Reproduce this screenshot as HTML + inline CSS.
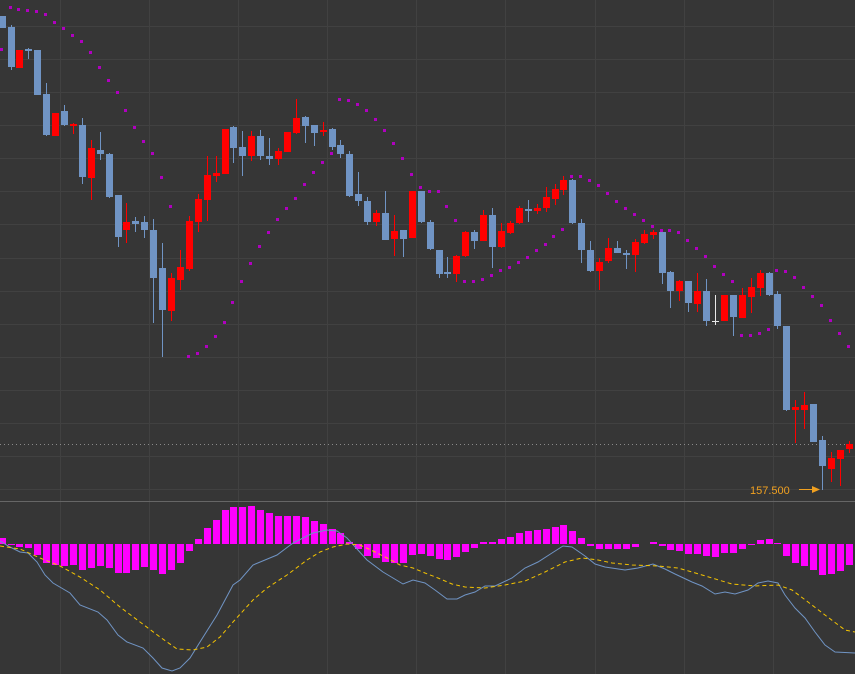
<!DOCTYPE html>
<html><head><meta charset="utf-8"><style>
html,body{margin:0;padding:0;background:#363636;}
svg{display:block}
</style></head><body>
<svg width="855" height="674" viewBox="0 0 855 674" xmlns="http://www.w3.org/2000/svg">
<rect width="855" height="674" fill="#363636"/>
<g stroke="#414141" stroke-width="1" shape-rendering="crispEdges">
<path d="M0 26.5H855M0 59.5H855M0 92.5H855M0 125.5H855M0 158.5H855M0 191.5H855M0 224.5H855M0 258.5H855M0 291.5H855M0 324.5H855M0 357.5H855M0 390.5H855M0 423.5H855M0 456.5H855M0 489.5H855"/>
<path d="M60.5 0V674M149.5 0V674M238.5 0V674M327.5 0V674M416.5 0V674M505.5 0V674M595.5 0V674M684.5 0V674M773.5 0V674"/>
</g>
<path d="M0 444.5H855" stroke="#8a8a8a" stroke-dasharray="1 3" shape-rendering="crispEdges"/>
<path d="M0 501.5H855" stroke="#666" shape-rendering="crispEdges"/>

<!-- SAR -->
<g fill="#b000c0">
<rect x="0" y="48" width="3" height="3"/>
<rect x="9" y="6" width="3" height="3"/><rect x="17" y="8" width="3" height="3"/><rect x="26" y="9" width="3" height="3"/><rect x="35" y="10" width="3" height="3"/><rect x="44" y="13" width="3" height="3"/><rect x="53" y="21" width="3" height="3"/><rect x="62" y="27" width="3" height="3"/><rect x="71" y="34" width="3" height="3"/><rect x="80" y="40" width="3" height="3"/><rect x="89" y="51" width="3" height="3"/><rect x="98" y="66" width="3" height="3"/><rect x="107" y="79" width="3" height="3"/><rect x="116" y="91" width="3" height="3"/><rect x="124" y="109" width="3" height="3"/><rect x="133" y="126" width="3" height="3"/><rect x="142" y="140" width="3" height="3"/><rect x="151" y="152" width="3" height="3"/><rect x="160" y="176" width="3" height="3"/><rect x="169" y="205" width="3" height="3"/>
<rect x="187" y="355" width="3" height="3"/><rect x="196" y="352" width="3" height="3"/><rect x="205" y="345" width="3" height="3"/><rect x="214" y="335" width="3" height="3"/><rect x="223" y="321" width="3" height="3"/><rect x="231" y="301" width="3" height="3"/><rect x="240" y="280" width="3" height="3"/><rect x="249" y="262" width="3" height="3"/><rect x="258" y="245" width="3" height="3"/><rect x="267" y="231" width="3" height="3"/><rect x="276" y="218" width="3" height="3"/><rect x="285" y="207" width="3" height="3"/><rect x="294" y="197" width="3" height="3"/><rect x="303" y="183" width="3" height="3"/><rect x="312" y="171" width="3" height="3"/><rect x="321" y="161" width="3" height="3"/><rect x="330" y="152" width="3" height="3"/>
<rect x="338" y="98" width="3" height="3"/><rect x="347" y="99" width="3" height="3"/><rect x="356" y="103" width="3" height="3"/><rect x="365" y="109" width="3" height="3"/><rect x="374" y="118" width="3" height="3"/><rect x="383" y="129" width="3" height="3"/><rect x="392" y="142" width="3" height="3"/><rect x="401" y="157" width="3" height="3"/><rect x="410" y="173" width="3" height="3"/><rect x="419" y="186" width="3" height="3"/><rect x="428" y="190" width="3" height="3"/><rect x="437" y="190" width="3" height="3"/><rect x="445" y="205" width="3" height="3"/><rect x="454" y="219" width="3" height="3"/>
<rect x="463" y="280" width="3" height="3"/><rect x="472" y="280" width="3" height="3"/><rect x="481" y="278" width="3" height="3"/><rect x="490" y="274" width="3" height="3"/><rect x="499" y="269" width="3" height="3"/><rect x="508" y="266" width="3" height="3"/><rect x="517" y="261" width="3" height="3"/><rect x="526" y="256" width="3" height="3"/><rect x="535" y="249" width="3" height="3"/><rect x="544" y="243" width="3" height="3"/><rect x="552" y="235" width="3" height="3"/><rect x="561" y="228" width="3" height="3"/>
<rect x="570" y="175" width="3" height="3"/><rect x="579" y="175" width="3" height="3"/><rect x="588" y="179" width="3" height="3"/><rect x="597" y="184" width="3" height="3"/><rect x="606" y="192" width="3" height="3"/><rect x="615" y="200" width="3" height="3"/><rect x="624" y="207" width="3" height="3"/><rect x="633" y="213" width="3" height="3"/><rect x="642" y="219" width="3" height="3"/><rect x="651" y="225" width="3" height="3"/><rect x="660" y="229" width="3" height="3"/><rect x="668" y="229" width="3" height="3"/><rect x="677" y="231" width="3" height="3"/><rect x="686" y="239" width="3" height="3"/><rect x="695" y="247" width="3" height="3"/><rect x="704" y="255" width="3" height="3"/><rect x="713" y="265" width="3" height="3"/><rect x="722" y="273" width="3" height="3"/><rect x="731" y="280" width="3" height="3"/>
<rect x="740" y="334" width="3" height="3"/><rect x="749" y="334" width="3" height="3"/><rect x="758" y="332" width="3" height="3"/><rect x="767" y="328" width="3" height="3"/>
<rect x="775" y="269" width="3" height="3"/><rect x="784" y="270" width="3" height="3"/><rect x="793" y="276" width="3" height="3"/><rect x="802" y="286" width="3" height="3"/><rect x="811" y="295" width="3" height="3"/><rect x="820" y="304" width="3" height="3"/><rect x="829" y="319" width="3" height="3"/><rect x="838" y="332" width="3" height="3"/><rect x="847" y="345" width="3" height="3"/>
</g>

<!-- blue candles -->
<g fill="#7094c4" stroke="#7094c4" shape-rendering="crispEdges">
<path fill="none" d="M11.5 25V70M28.5 48V59M46.5 83V136M64.5 105V126M82.5 118V184M100.5 132V160M109.5 153V198M118.5 195V247M135.5 217V232M144.5 216V238M153.5 219V323M162.5 243V357M233.5 126V163M242.5 131V176M260.5 130V160M269.5 138V165M305.5 116V143M314.5 125V146M332.5 128V150M340.5 140V158M349.5 151V197M358.5 172V206M367.5 197V225M385.5 191V240M403.5 230V257M421.5 191V223M430.5 220V250M439.5 250V278M447.5 257V278M474.5 230V249M492.5 208V268M528.5 200V222M572.5 179V224M581.5 219V263M590.5 241V272M617.5 241V253M626.5 250V269M662.5 232V284M670.5 271V308M688.5 281V312M706.5 279V326M733.5 295V336M769.5 272V296M777.5 291V329M786.5 326V411M813.5 404V442M822.5 436V490"/>
<g stroke="none">
<rect x="0" y="16" width="6" height="12"/><rect x="8" y="27" width="7" height="40"/><rect x="25" y="49" width="7" height="2"/><rect x="34" y="50" width="7" height="45"/><rect x="43" y="94" width="7" height="41"/><rect x="61" y="111" width="7" height="14"/><rect x="79" y="125" width="7" height="52"/><rect x="97" y="150" width="7" height="4"/><rect x="106" y="154" width="7" height="43"/><rect x="115" y="195" width="7" height="42"/><rect x="132" y="221" width="7" height="3"/><rect x="141" y="222" width="7" height="8"/><rect x="150" y="230" width="7" height="48"/><rect x="159" y="268" width="7" height="42"/>
<rect x="230" y="127" width="7" height="21"/><rect x="239" y="147" width="7" height="9"/><rect x="257" y="136" width="7" height="20"/><rect x="266" y="156" width="7" height="3"/>
<rect x="302" y="117" width="7" height="9"/><rect x="311" y="125" width="7" height="8"/><rect x="329" y="129" width="7" height="18"/><rect x="337" y="145" width="7" height="9"/><rect x="346" y="154" width="7" height="42"/><rect x="355" y="194" width="7" height="7"/><rect x="364" y="201" width="7" height="21"/><rect x="382" y="213" width="7" height="27"/><rect x="400" y="230" width="7" height="9"/><rect x="418" y="191" width="7" height="31"/><rect x="427" y="222" width="7" height="27"/><rect x="436" y="250" width="7" height="24"/><rect x="444" y="272" width="7" height="2"/><rect x="471" y="232" width="7" height="9"/><rect x="489" y="215" width="7" height="32"/><rect x="525" y="209" width="7" height="2"/>
<rect x="569" y="180" width="7" height="43"/><rect x="578" y="223" width="7" height="27"/><rect x="587" y="250" width="7" height="21"/><rect x="614" y="248" width="7" height="5"/><rect x="623" y="253" width="7" height="2"/><rect x="659" y="232" width="7" height="41"/><rect x="667" y="272" width="7" height="19"/><rect x="685" y="281" width="7" height="22"/><rect x="703" y="291" width="7" height="30"/><rect x="730" y="295" width="7" height="22"/><rect x="766" y="273" width="7" height="22"/><rect x="774" y="294" width="7" height="32"/><rect x="783" y="326" width="7" height="84"/><rect x="810" y="404" width="7" height="38"/><rect x="819" y="440" width="7" height="26"/>
</g></g>

<!-- red candles -->
<g fill="#ff0000" stroke="#ff0000" shape-rendering="crispEdges">
<path fill="none" d="M73.5 123V134M91.5 140V200M126.5 203V243M171.5 273V321M180.5 250V290M189.5 216V271M198.5 194V232M207.5 156V221M216.5 156V182M251.5 131V161M278.5 148V165M296.5 99V134M323.5 122V136M376.5 210V226M394.5 215V256M456.5 255V282M465.5 231V257M483.5 210V241M501.5 223V248M510.5 221V234M519.5 206V224M537.5 204V214M546.5 187V212M555.5 184V205M563.5 176V195M599.5 258V290M608.5 238V263M635.5 239V272M644.5 230V244M653.5 230V239M679.5 280V301M697.5 273V312M742.5 288V318M751.5 278V313M760.5 270V296M795.5 400V443M804.5 392V429M831.5 452V482M840.5 450V486M849.5 441V453"/>
<g stroke="none">
<rect x="16" y="50" width="7" height="18"/><rect x="52" y="113" width="7" height="23"/><rect x="70" y="124" width="7" height="2"/><rect x="88" y="148" width="7" height="30"/><rect x="123" y="222" width="7" height="8"/><rect x="168" y="278" width="7" height="33"/><rect x="177" y="267" width="7" height="13"/><rect x="186" y="221" width="7" height="48"/><rect x="195" y="199" width="7" height="23"/><rect x="204" y="175" width="7" height="25"/><rect x="213" y="173" width="7" height="3"/><rect x="222" y="129" width="7" height="45"/><rect x="248" y="136" width="7" height="20"/><rect x="275" y="151" width="7" height="8"/><rect x="284" y="132" width="7" height="20"/><rect x="293" y="118" width="7" height="15"/><rect x="320" y="130" width="7" height="2"/>
<rect x="373" y="213" width="7" height="9"/><rect x="391" y="231" width="7" height="8"/><rect x="409" y="191" width="7" height="47"/><rect x="453" y="256" width="7" height="18"/><rect x="462" y="232" width="7" height="24"/><rect x="480" y="215" width="7" height="26"/><rect x="498" y="231" width="7" height="16"/><rect x="507" y="223" width="7" height="10"/><rect x="516" y="208" width="7" height="15"/><rect x="534" y="208" width="7" height="3"/><rect x="543" y="197" width="7" height="11"/><rect x="552" y="189" width="7" height="10"/><rect x="560" y="180" width="7" height="10"/>
<rect x="596" y="262" width="7" height="9"/><rect x="605" y="248" width="7" height="13"/><rect x="632" y="242" width="7" height="13"/><rect x="641" y="234" width="7" height="9"/><rect x="650" y="232" width="7" height="3"/><rect x="676" y="281" width="7" height="10"/><rect x="694" y="291" width="7" height="13"/><rect x="721" y="295" width="7" height="26"/><rect x="739" y="295" width="7" height="23"/><rect x="748" y="287" width="7" height="10"/><rect x="757" y="273" width="7" height="15"/><rect x="792" y="407" width="7" height="3"/><rect x="801" y="405" width="7" height="5"/><rect x="828" y="458" width="7" height="11"/><rect x="837" y="450" width="7" height="9"/><rect x="846" y="444" width="7" height="5"/>
</g></g>
<path d="M715.5 295V325M712 321.5H719" stroke="#e8e8e8" fill="none" shape-rendering="crispEdges"/>

<!-- price label -->
<text x="750" y="494" font-family="Liberation Sans, sans-serif" font-size="11" fill="#f0a020">157.500</text>
<path d="M799 489.5H812" stroke="#f0a020"/>
<path d="M812 486L820 489.5L812 493Z" fill="#f0a020"/>

<!-- MACD histogram -->
<g fill="#ff00ff" shape-rendering="crispEdges">
<rect x="0" y="538" width="6" height="6"/><rect x="8" y="544" width="7" height="1"/><rect x="16" y="544" width="7" height="3"/><rect x="25" y="544" width="7" height="4"/><rect x="34" y="544" width="7" height="11"/><rect x="43" y="544" width="7" height="19"/><rect x="52" y="544" width="7" height="21"/><rect x="61" y="544" width="7" height="22"/><rect x="70" y="544" width="7" height="21"/><rect x="79" y="544" width="7" height="26"/><rect x="88" y="544" width="7" height="24"/><rect x="97" y="544" width="7" height="22"/><rect x="106" y="544" width="7" height="24"/><rect x="115" y="544" width="7" height="29"/><rect x="123" y="544" width="7" height="29"/><rect x="132" y="544" width="7" height="26"/><rect x="141" y="544" width="7" height="23"/><rect x="150" y="544" width="7" height="26"/><rect x="159" y="544" width="7" height="30"/><rect x="168" y="544" width="7" height="26"/><rect x="177" y="544" width="7" height="19"/><rect x="186" y="544" width="7" height="7"/>
<rect x="195" y="539" width="7" height="5"/><rect x="204" y="528" width="7" height="16"/><rect x="213" y="520" width="7" height="24"/><rect x="222" y="510" width="7" height="34"/><rect x="230" y="507" width="7" height="37"/><rect x="239" y="507" width="7" height="37"/><rect x="248" y="506" width="7" height="38"/><rect x="257" y="510" width="7" height="34"/><rect x="266" y="513" width="7" height="31"/><rect x="275" y="516" width="7" height="28"/><rect x="284" y="516" width="7" height="28"/><rect x="293" y="516" width="7" height="28"/><rect x="302" y="517" width="7" height="27"/><rect x="311" y="521" width="7" height="23"/><rect x="320" y="524" width="7" height="20"/><rect x="329" y="529" width="7" height="15"/><rect x="337" y="533" width="7" height="11"/><rect x="346" y="542" width="7" height="2"/>
<rect x="355" y="544" width="7" height="5"/><rect x="364" y="544" width="7" height="12"/><rect x="373" y="544" width="7" height="14"/><rect x="382" y="544" width="7" height="18"/><rect x="391" y="544" width="7" height="19"/><rect x="400" y="544" width="7" height="19"/><rect x="409" y="544" width="7" height="11"/><rect x="418" y="544" width="7" height="10"/><rect x="427" y="544" width="7" height="12"/><rect x="436" y="544" width="7" height="15"/><rect x="444" y="544" width="7" height="16"/><rect x="453" y="544" width="7" height="13"/><rect x="462" y="544" width="7" height="8"/><rect x="471" y="544" width="7" height="4"/>
<rect x="480" y="542" width="7" height="2"/><rect x="489" y="542" width="7" height="2"/><rect x="498" y="539" width="7" height="5"/><rect x="507" y="537" width="7" height="7"/><rect x="516" y="533" width="7" height="11"/><rect x="525" y="531" width="7" height="13"/><rect x="534" y="530" width="7" height="14"/><rect x="543" y="529" width="7" height="15"/><rect x="552" y="527" width="7" height="17"/><rect x="560" y="525" width="7" height="19"/><rect x="569" y="531" width="7" height="13"/><rect x="578" y="538" width="7" height="6"/>
<rect x="587" y="544" width="7" height="2"/><rect x="596" y="544" width="7" height="5"/><rect x="605" y="544" width="7" height="5"/><rect x="614" y="544" width="7" height="5"/><rect x="623" y="544" width="7" height="5"/><rect x="632" y="544" width="7" height="3"/><rect x="650" y="542" width="7" height="2"/><rect x="659" y="544" width="7" height="2"/><rect x="667" y="544" width="7" height="6"/><rect x="676" y="544" width="7" height="7"/><rect x="685" y="544" width="7" height="10"/><rect x="694" y="544" width="7" height="10"/><rect x="703" y="544" width="7" height="12"/><rect x="712" y="544" width="7" height="13"/><rect x="721" y="544" width="7" height="9"/><rect x="730" y="544" width="7" height="9"/><rect x="739" y="544" width="7" height="5"/><rect x="748" y="544" width="7" height="1"/>
<rect x="757" y="540" width="7" height="4"/><rect x="766" y="539" width="7" height="5"/><rect x="774" y="543" width="7" height="1"/><rect x="783" y="544" width="7" height="12"/><rect x="792" y="544" width="7" height="19"/><rect x="801" y="544" width="7" height="22"/><rect x="810" y="544" width="7" height="26"/><rect x="819" y="544" width="7" height="31"/><rect x="828" y="544" width="7" height="30"/><rect x="837" y="544" width="7" height="27"/><rect x="846" y="544" width="7" height="21"/>
</g>

<polyline fill="none" stroke="#7094c4" stroke-width="1" points="0,541 10,547 20,552 28,553 37,562 45,575 53,583 70,593 80,605 98,612 107,620 118,635 127,642 143,648 153,658 162,668 172,671 180,668 190,658 200,642 217,615 233,585 240,580 253,565 277,555 293,543 313,533 327,530 337,531 347,538 367,560 383,572 403,584 413,580 425,583 435,590 447,599 457,599 465,595 475,592 485,586 495,586 512,578 525,568 538,562 552,553 563,546 572,547 585,556 595,564 605,567 625,570 638,568 653,564 665,569 675,574 692,582 702,586 715,594 725,592 735,594 748,590 758,583 768,581 778,583 785,595 795,608 805,618 815,632 825,645 835,652 855,653"/>
<polyline fill="none" stroke="#f5c400" stroke-width="1" stroke-dasharray="4 3" points="0,546 20,549 40,558 60,566 80,577 100,590 120,607 140,622 160,637 177,649 193,650 207,647 220,637 233,622 253,600 267,588 287,575 307,560 320,552 333,547 347,544 360,545 373,551 387,558 400,565 413,568 425,573 438,578 452,584 465,587 485,588 505,585 525,581 545,572 565,562 582,558 598,560 612,563 632,565 658,566 678,568 692,572 712,578 732,584 755,586 778,585 792,590 808,602 825,615 845,630 855,632"/>
</svg>
</body></html>
